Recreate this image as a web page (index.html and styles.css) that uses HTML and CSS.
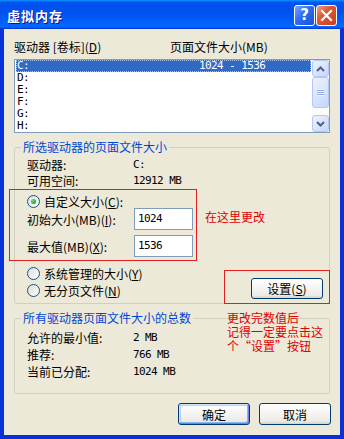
FILE: index.html
```html
<!DOCTYPE html>
<html lang="zh-CN">
<head>
  <meta charset="UTF-8">
  <title>虚拟内存</title>
  <link rel="stylesheet" href="styles.css">
</head>
<body>
<div class="window">
  <div class="titlebar">
    <span class="title">虚拟内存</span>
    <div class="title-buttons">
      <span class="tb-btn help">?</span>
      <span class="tb-btn close">
        <svg width="13" height="13" viewBox="0 0 13 13"><path d="M2 2 L11 11 M11 2 L2 11" stroke="#fff" stroke-width="2.2" stroke-linecap="square"/></svg>
      </span>
    </div>
  </div>

  <div class="content">
    <div class="list-head">
      <span class="head-drive">驱动器 [卷标](<u>D</u>)</span>
      <span>页面文件大小(MB)</span>
    </div>

    <div class="listbox">
      <div class="rows">
        <div class="row selected"><span class="col-drive mono">C:</span><span class="mono">1024 - 1536</span></div>
        <div class="row"><span class="col-drive mono">D:</span></div>
        <div class="row"><span class="col-drive mono">E:</span></div>
        <div class="row"><span class="col-drive mono">F:</span></div>
        <div class="row"><span class="col-drive mono">G:</span></div>
        <div class="row"><span class="col-drive mono">H:</span></div>
      </div>
      <div class="scrollbar">
        <div class="sb-btn">
          <svg width="9" height="6" viewBox="0 0 9 6"><path d="M1 5 L4.5 1.5 L8 5" fill="none" stroke="#4d6185" stroke-width="2"/></svg>
        </div>
        <div class="sb-thumb"><span class="grip"></span></div>
        <div class="sb-track"></div>
        <div class="sb-btn">
          <svg width="9" height="6" viewBox="0 0 9 6"><path d="M1 1 L4.5 4.5 L8 1" fill="none" stroke="#4d6185" stroke-width="2"/></svg>
        </div>
      </div>
    </div>

    <fieldset class="group selected-drive">
      <legend>所选驱动器的页面文件大小</legend>
      <div class="info-row first"><span class="info-label">驱动器:</span><span class="mono">C:</span></div>
      <div class="info-row"><span class="info-label">可用空间:</span><span class="mono">12912 MB</span></div>

      <div class="custom-line">
        <div class="mark custom-mark">
          <div class="radio-row"><span class="radio checked"></span>自定义大小(<u>C</u>):</div>
          <div class="input-row"><span class="input-label">初始大小(MB)(<u>I</u>):</span><span class="textbox mono">1024</span></div>
          <div class="input-row second"><span class="input-label">最大值(MB)(<u>X</u>):</span><span class="textbox mono">1536</span></div>
        </div>
        <span class="note change-note">在这里更改</span>
      </div>

      <div class="bottom-line">
        <div class="radios">
          <div class="radio-row"><span class="radio"></span>系统管理的大小(<u>Y</u>)</div>
          <div class="radio-row"><span class="radio"></span>无分页文件(<u>N</u>)</div>
        </div>
        <div class="mark set-mark">
          <button class="btn set-btn">设置(<u>S</u>)</button>
        </div>
      </div>
    </fieldset>

    <fieldset class="group totals">
      <legend>所有驱动器页面文件大小的总数</legend>
      <div class="totals-line">
        <div class="totals-rows">
          <div class="info-row"><span class="info-label">允许的最小值:</span><span class="mono">2 MB</span></div>
          <div class="info-row"><span class="info-label">推荐:</span><span class="mono">766 MB</span></div>
          <div class="info-row"><span class="info-label">当前已分配:</span><span class="mono">1024 MB</span></div>
        </div>
        <div class="note set-note">更改完数值后<br>记得一定要点击这<br>个“设置”按钮</div>
      </div>
    </fieldset>

    <div class="actions">
      <button class="btn default">确定</button>
      <button class="btn">取消</button>
    </div>
  </div>
</div>
</body>
</html>
```

FILE: styles.css
```css
body {
  margin: 0;
  font-family: "Noto Sans CJK SC", sans-serif;
  font-size: 12px;
  color: #000;
}

u {
  text-decoration: underline;
  text-underline-offset: 1px;
}

.mono {
  font-family: "DejaVu Sans Mono", monospace;
  font-size: 11px;
  letter-spacing: -0.6px;
}

.window {
  width: 344px;
  height: 439px;
  display: flex;
  flex-direction: column;
  background-color: #0831d9;
}

/* title bar */
.titlebar {
  height: 29px;
  box-sizing: border-box;
  padding: 1px 7px 0 7px;
  display: flex;
  align-items: center;
  justify-content: space-between;
  background: linear-gradient(180deg, #0997ff, #0053ee 8%, #0050ee 40%, #0066ff 88%, #0066ff 93%, #005bff 95%, #003dd7 96%, #003dd7);
}

.title {
  color: #fff;
  font-weight: bold;
  font-size: 13px;
  letter-spacing: 1px;
  text-shadow: 1px 1px #0f1089;
}

.title-buttons {
  display: flex;
  gap: 1px;
}

.tb-btn {
  width: 21px;
  height: 21px;
  box-sizing: border-box;
  border: 1px solid #fff;
  border-radius: 3px;
  display: flex;
  align-items: center;
  justify-content: center;
  color: #fff;
}

.help {
  background: linear-gradient(135deg, #7aa6ff, #2d6cf0 45%, #1850d8);
  font-family: "DejaVu Sans", sans-serif;
  font-weight: bold;
  font-size: 15px;
}

.close {
  background: linear-gradient(135deg, #f0a08a, #e0562f 40%, #c9401a);
}

/* dialog body */
.content {
  flex: 1;
  margin: 0 4px 4px 4px;
  padding: 12px 10px 0 10px;
  background-color: #ece9d8;
}

.list-head {
  display: flex;
  line-height: 12px;
  height: 12px;
}

.head-drive {
  width: 156px;
}

.listbox {
  margin-top: 6px;
  height: 74px;
  box-sizing: border-box;
  border: 1px solid #7f9db9;
  background-color: #fff;
  display: flex;
}

.rows {
  flex: 1;
}

.row {
  display: flex;
  height: 12px;
  line-height: 12px;
  margin: 0 1px;
  padding-left: 1px;
}

.row.selected {
  background-color: #316ac5;
  color: #fff;
  outline: 1px dotted #a6bde6;
  outline-offset: -1px;
}

.col-drive {
  width: 182px;
}

.scrollbar {
  width: 17px;
  display: flex;
  flex-direction: column;
  background-color: #fbfbf8;
}

.sb-btn,
.sb-thumb {
  box-sizing: border-box;
  border: 1px solid #b4c8f6;
  border-radius: 3px;
  background: linear-gradient(135deg, #eef3fe, #c6d6fb);
  display: flex;
  align-items: center;
  justify-content: center;
}

.sb-btn {
  height: 17px;
}

.sb-thumb {
  height: 31px;
}

.grip {
  width: 7px;
  height: 7px;
  background: repeating-linear-gradient(180deg, #eef3fe 0 1px, #8faae6 1px 2px);
}

.sb-track {
  flex: 1;
}

/* group boxes */
.group {
  margin: 8px 0 0 0;
  padding: 0;
  min-width: 0;
  border: 1px solid #d0d0bf;
  border-radius: 3px;
}

.group legend {
  margin-left: 6px;
  padding: 0 2px;
  line-height: 12px;
  color: #0046d5;
}

.info-row {
  display: flex;
  height: 16px;
  line-height: 16px;
  padding-left: 12px;
}

.info-row.first {
  margin-top: 4px;
}

.info-label {
  width: 106px;
}

.custom-line {
  display: flex;
  align-items: flex-start;
}

.mark {
  box-sizing: border-box;
  border: 1px solid #e02020;
}

.custom-mark {
  width: 188px;
  margin-left: -6px;
  padding: 5px 3px 3px 17px;
}

.radio-row {
  display: flex;
  align-items: center;
  height: 13px;
  line-height: 13px;
}

.radio {
  flex: none;
  width: 13px;
  height: 13px;
  box-sizing: border-box;
  margin-right: 4px;
  border: 1px solid #1c5180;
  border-radius: 50%;
  background: linear-gradient(135deg, #dcdcd7, #fff);
  display: flex;
  align-items: center;
  justify-content: center;
}

.radio.checked::after {
  content: "";
  width: 5px;
  height: 5px;
  border-radius: 50%;
  background: radial-gradient(circle at 35% 35%, #7be078, #21a121 70%);
}

.input-row {
  display: flex;
  align-items: center;
  height: 22px;
}

.input-row.second {
  margin-top: 5px;
}

.input-label {
  width: 107px;
}

.textbox {
  width: 59px;
  height: 22px;
  box-sizing: border-box;
  border: 1px solid #7f9db9;
  background-color: #fff;
  padding-left: 3px;
  line-height: 20px;
}

.note {
  color: #e00000;
}

.change-note {
  margin: 22px 0 0 8px;
  line-height: 12px;
}

.bottom-line {
  display: flex;
  align-items: flex-start;
}

.radios {
  flex: 1;
  padding: 4px 0 0 12px;
}

.radios .radio-row {
  height: 17px;
  line-height: 17px;
}

.set-mark {
  width: 106px;
  height: 34px;
  margin: 9px -1px -1px 0;
  padding: 7px 0 0 26px;
}

.btn {
  font-family: inherit;
  font-size: 12px;
  color: #000;
  width: 72px;
  height: 22px;
  padding: 0;
  border: 1px solid #003c74;
  border-radius: 3px;
  background: linear-gradient(180deg, #fff, #ecebe6 86%, #d6d0c5);
}

.set-btn {
  height: 21px;
}

.btn.default {
  box-shadow: inset -1px -1px #6982ee, inset 1px 1px #cee7ff, inset -2px -2px #8cb4f2, inset 2px 2px #b8d0f9;
}

.totals {
  padding-bottom: 13px;
}

.totals-line {
  display: flex;
  align-items: flex-start;
}

.totals-rows {
  width: 212px;
  padding-top: 5px;
}

.totals .info-row {
  height: 17px;
  line-height: 17px;
}

.set-note {
  margin-top: -13px;
  line-height: 14px;
}

.actions {
  display: flex;
  justify-content: flex-end;
  gap: 9px;
  margin: 9px -1px 0 0;
}
```
